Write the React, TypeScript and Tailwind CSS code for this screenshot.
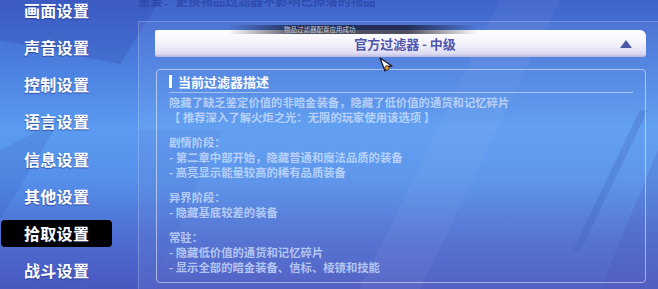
import React from "react";

const menu = ["画面设置", "声音设置", "控制设置", "语言设置", "信息设置", "其他设置", "拾取设置", "战斗设置"];

const body: (string | null)[] = [
  "隐藏了缺乏鉴定价值的非暗金装备，隐藏了低价值的通货和记忆碎片",
  "【 推荐深入了解火炬之光：无限的玩家使用该选项 】",
  null,
  "剧情阶段：",
  "- 第二章中部开始，隐藏普通和魔法品质的装备",
  "- 高亮显示能量较高的稀有品质装备",
  null,
  "异界阶段：",
  "- 隐藏基底较差的装备",
  null,
  "常驻：",
  "- 隐藏低价值的通货和记忆碎片",
  "- 显示全部的暗金装备、信标、棱镜和技能",
];

export default function App() {
  return (
    <div
      className="relative w-[658px] h-[289px] overflow-hidden flex bg-[linear-gradient(180deg,#4064cc_0%,#4d82e2_25%,#5a9bf1_45%,#5590ea_62%,#4d6ed2_82%,#4a58c0_100%)]"
      style={{ fontFamily: '"Noto Sans CJK SC", "Noto Sans", sans-serif' }}
    >
      {/* background decoration */}
      <svg className="absolute inset-0 pointer-events-none" width="658" height="289" viewBox="0 0 658 289">
        <polygon points="0,0 160,0 120,64 0,40" fill="#2a3aa0" opacity="0.22" />
        <polygon points="0,150 60,120 0,220" fill="#2a3aa0" opacity="0.12" />
        <polygon points="500,0 560,0 420,289 360,289" fill="#ffffff" opacity="0.04" />
        <polygon points="640,110 648,110 580,252 572,252" fill="#3050b0" opacity="0.25" />
        <polygon points="658,150 658,289 600,289" fill="#3a48b0" opacity="0.2" />
        <polygon points="138,130 222,130 150,289 138,289" fill="#3a60c8" opacity="0.15" />
      </svg>

      {/* sidebar */}
      <div className="relative w-[138px] shrink-0 flex flex-col mt-[-9px]">
        {menu.map((m, i) => (
          <div key={m} className="h-[37.3px] flex items-center">
            <div
              className={
                "ml-[1px] w-[111px] h-[27px] flex items-center pl-[23px] rounded-[4px] text-[16px] font-bold text-white tracking-[0.3px] [text-shadow:0_1px_1px_rgba(30,40,110,0.6)] " +
                (i === 6 ? "bg-black" : "")
              }
            >
              {m}
            </div>
          </div>
        ))}
      </div>

      {/* main */}
      <div className="relative flex-1 flex flex-col">
        <div className="h-[28px] mt-[-7px] flex items-start text-[12.5px] leading-[15px] font-bold text-[#2c45a8] opacity-80 whitespace-nowrap">
          重要：更换物品过滤器不影响已掉落的物品
        </div>
        <div className="flex-1 flex flex-col bg-white/[0.06] border-l border-t border-white/20 pl-[16px] pr-[12px] pt-[8px]">
          {/* dropdown */}
          <div className="relative h-[27px] flex items-center justify-center pl-[9px] rounded-tl-[2px] rounded-bl-[3px] rounded-tr-[6px] rounded-br-[3px] bg-[linear-gradient(180deg,#ffffff_0%,#f2f1fb_55%,#dcdaf2_88%,#b8b6e0_100%)]">
            <span className="text-[13px] font-bold text-[#4f56ad] whitespace-nowrap">官方过滤器 - 中级</span>
            <svg className="absolute right-[14px] top-[10px]" width="12" height="8" viewBox="0 0 12 8">
              <polygon points="6,0 12,8 0,8" fill="#4a58a8" />
            </svg>
          </div>

          {/* description */}
          <div className="mt-[12px] ml-[1px] h-[214px] border border-white/50 rounded-[4px] px-[12px] flex flex-col">
            <div className="mt-[4px] h-[15px] flex items-center">
              <div className="w-[3px] h-[13px] bg-white" />
              <span className="ml-[6px] text-[13px] font-bold text-white leading-[15px] whitespace-nowrap">当前过滤器描述</span>
            </div>
            <div className="mt-[3px] h-px bg-white/45" />
            <div className="mt-[2px] flex flex-col text-[11.35px] font-bold text-[#d4e3ff]/75 whitespace-nowrap">
              {body.map((l, i) =>
                l === null ? (
                  <div key={i} className="h-[10px]" />
                ) : (
                  <div key={i} className="h-[15px] leading-[15px]">
                    {l}
                  </div>
                )
              )}
            </div>
          </div>
        </div>
      </div>

      {/* toast */}
      <div className="absolute left-[228px] top-[25px] w-[250px] h-[9px] flex items-center justify-start pl-[56px] bg-[linear-gradient(90deg,rgba(20,22,45,0)_0%,rgba(20,22,45,0.75)_28%,rgba(20,22,45,0.75)_72%,rgba(20,22,45,0)_100%)]">
        <span className="text-[6.5px] leading-[9px] text-[#c8c8d0] whitespace-nowrap">物品过滤器配置应用成功</span>
      </div>

      {/* cursor */}
      <svg className="absolute left-[378px] top-[57px]" width="16" height="16" viewBox="0 0 16 16">
        <polygon points="2,1 14,9 9,9.5 7,14" fill="#fff" stroke="#1a1a2a" strokeWidth="1.3" strokeLinejoin="round" />
        <circle cx="9" cy="11" r="2.2" fill="#f0a020" stroke="#1a1a2a" strokeWidth="0.8" />
      </svg>
    </div>
  );
}
